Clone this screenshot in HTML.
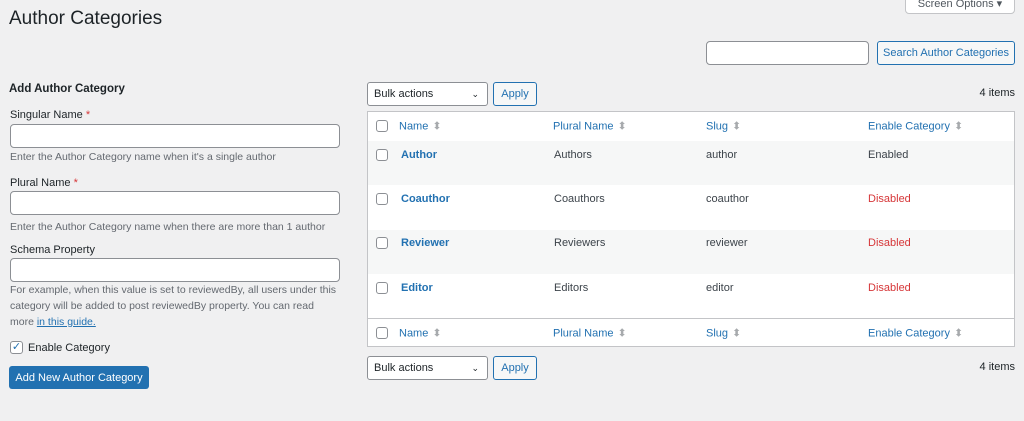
<!DOCTYPE html><html><head><style>
body{margin:0;width:1024px;height:421px;background:#f0f0f1;font-family:"Liberation Sans",sans-serif;color:#1d2327;position:relative;overflow:hidden;font-size:11px}
.a{position:absolute}
.inp{position:absolute;background:#fff;border:1px solid #8c8f94;border-radius:4px;box-sizing:border-box}
.btn{position:absolute;box-sizing:border-box;border:1px solid #2271b1;color:#2271b1;background:#f6f7f7;border-radius:3px;font-size:11px;display:flex;align-items:center;justify-content:center}
.lbl{position:absolute;left:10px;font-size:11px}
.desc{position:absolute;left:10px;font-size:10.5px;color:#646970;line-height:16px;white-space:nowrap}
.req{color:#d63638}
.cb{position:absolute;width:12px;height:12px;border:1px solid #8c8f94;border-radius:3px;background:#fff;box-sizing:border-box}
.row{position:absolute;left:0;width:100%}
.c{position:absolute;font-size:11px;transform:translateY(-50%)}
.h{color:#2271b1}
.s{color:#a7aaad;font-size:11px;margin-left:4px}
.l{color:#2271b1;font-weight:bold}
.t{color:#3c434a}
.dis{color:#d63638}
.sel{position:absolute;background:#fff;border:1px solid #8c8f94;border-radius:3px;box-sizing:border-box;font-size:11px;padding-left:6px;display:flex;align-items:center}
</style></head><body>
<div class="a" style="left:9px;top:8px;font-size:19px;color:#1d2327">Author Categories</div>
<div class="a" style="left:905px;top:-8px;width:110px;height:22px;background:#fff;border:1px solid #c3c4c7;border-radius:0 0 4px 4px;box-sizing:border-box;font-size:11px;color:#50575e;text-align:center;line-height:22px">Screen Options ▾</div>
<div class="inp" style="left:706px;top:41px;width:163px;height:24px"></div>
<div class="btn" style="left:877px;top:41px;width:138px;height:24px">Search Author Categories</div>

<div class="a" style="left:9px;top:83px;font-size:11.5px;font-weight:bold">Add Author Category</div>
<div class="lbl" style="top:109px">Singular Name <span class="req">*</span></div>
<div class="inp" style="left:10px;top:124px;width:330px;height:24px"></div>
<div class="desc" style="top:149px">Enter the Author Category name when it's a single author</div>
<div class="lbl" style="top:177px">Plural Name <span class="req">*</span></div>
<div class="inp" style="left:10px;top:191px;width:330px;height:24px"></div>
<div class="desc" style="top:219px">Enter the Author Category name when there are more than 1 author</div>
<div class="lbl" style="top:244px">Schema Property</div>
<div class="inp" style="left:10px;top:258px;width:330px;height:24px"></div>
<div class="desc" style="top:282px">For example, when this value is set to reviewedBy, all users under this<br>category will be added to post reviewedBy property. You can read<br>more <span style="color:#2271b1;text-decoration:underline">in this guide.</span></div>
<div class="cb" style="left:10px;top:341px;width:13px;height:13px;color:#2271b1;font-size:11px;line-height:11px;text-align:center">✓</div>
<div class="a" style="left:28px;top:342px;font-size:11px">Enable Category</div>
<div class="a" style="left:9px;top:366px;width:140px;height:23px;background:#2271b1;border-radius:3px;color:#fff;font-size:11px;display:flex;align-items:center;justify-content:center">Add New Author Category</div>

<div class="sel" style="left:367px;top:82px;width:121px;height:24px">Bulk actions<span style="position:absolute;right:8px;font-size:9px">⌄</span></div>
<div class="btn" style="left:493px;top:82px;width:44px;height:24px">Apply</div>
<div class="a" style="right:9px;top:87px">4 items</div>

<div class="a" style="left:367px;top:111px;width:648px;height:236px;background:#fff;border:1px solid #c3c4c7;box-sizing:border-box">
 <div class="row" style="top:0;height:29px;border-bottom:1px solid #c3c4c7"></div>
 <div class="row" style="top:29px;height:44px;background:#f6f7f7"></div>
 <div class="row" style="top:118px;height:44px;background:#f6f7f7"></div>
 <div class="row" style="top:206px;height:29px;border-top:1px solid #c3c4c7"></div>
</div>
<div class="a" style="left:367px;top:111px;width:648px;height:236px">
 <div class="cb" style="left:9px;top:9px"></div>
 <div class="c h" style="left:32px;top:15px">Name<span class="s">⬍</span></div>
 <div class="c h" style="left:186px;top:15px">Plural Name<span class="s">⬍</span></div>
 <div class="c h" style="left:339px;top:15px">Slug<span class="s">⬍</span></div>
 <div class="c h" style="left:501px;top:15px">Enable Category<span class="s">⬍</span></div>

 <div class="cb" style="left:9px;top:38px"></div>
 <div class="c l" style="left:34px;top:44px">Author</div>
 <div class="c t" style="left:187px;top:44px">Authors</div>
 <div class="c t" style="left:339px;top:44px">author</div>
 <div class="c t" style="left:501px;top:44px">Enabled</div>

 <div class="cb" style="left:9px;top:82px"></div>
 <div class="c l" style="left:34px;top:88px">Coauthor</div>
 <div class="c t" style="left:187px;top:88px">Coauthors</div>
 <div class="c t" style="left:339px;top:88px">coauthor</div>
 <div class="c dis" style="left:501px;top:88px">Disabled</div>

 <div class="cb" style="left:9px;top:126px"></div>
 <div class="c l" style="left:34px;top:132px">Reviewer</div>
 <div class="c t" style="left:187px;top:132px">Reviewers</div>
 <div class="c t" style="left:339px;top:132px">reviewer</div>
 <div class="c dis" style="left:501px;top:132px">Disabled</div>

 <div class="cb" style="left:9px;top:171px"></div>
 <div class="c l" style="left:34px;top:177px">Editor</div>
 <div class="c t" style="left:187px;top:177px">Editors</div>
 <div class="c t" style="left:339px;top:177px">editor</div>
 <div class="c dis" style="left:501px;top:177px">Disabled</div>

 <div class="cb" style="left:9px;top:216px"></div>
 <div class="c h" style="left:32px;top:222px">Name<span class="s">⬍</span></div>
 <div class="c h" style="left:186px;top:222px">Plural Name<span class="s">⬍</span></div>
 <div class="c h" style="left:339px;top:222px">Slug<span class="s">⬍</span></div>
 <div class="c h" style="left:501px;top:222px">Enable Category<span class="s">⬍</span></div>
</div>

<div class="sel" style="left:367px;top:356px;width:121px;height:24px">Bulk actions<span style="position:absolute;right:8px;font-size:9px">⌄</span></div>
<div class="btn" style="left:493px;top:356px;width:44px;height:24px">Apply</div>
<div class="a" style="right:9px;top:361px">4 items</div>
</body></html>
